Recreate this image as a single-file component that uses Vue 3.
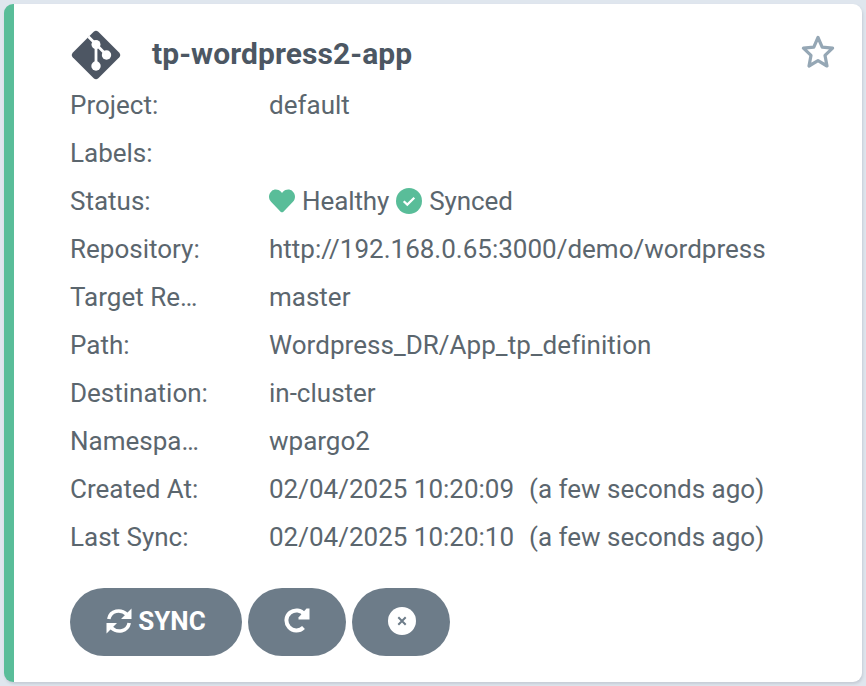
<script setup>
const rows = [
  { label: 'Project:', value: 'default' },
  { label: 'Labels:', value: '' },
  { label: 'Status:', status: true },
  { label: 'Repository:', value: 'http://192.168.0.65:3000/demo/wordpress' },
  { label: 'Target Re…', value: 'master' },
  { label: 'Path:', value: 'Wordpress_DR/App_tp_definition', wide: true },
  { label: 'Destination:', value: 'in-cluster' },
  { label: 'Namespa…', value: 'wpargo2' },
  { label: 'Created At:', value: '02/04/2025 10:20:09', ago: '(a few seconds ago)' },
  { label: 'Last Sync:', value: '02/04/2025 10:20:10', ago: '(a few seconds ago)' },
]
</script>

<template>
  <main class="page">
    <article class="card">
      <header class="head">
        <svg class="git" viewBox="0 0 50 50">
          <path fill="#4d5663" d="M22.7 1.7Q25 -.2 27.3 1.7L48.3 22.7Q50.2 25 48.3 27.3L27.3 48.3Q25 50.2 22.7 48.3L1.7 27.3Q-.2 25 1.7 22.7Z" />
          <path fill="none" stroke="#fff" stroke-width="2.8" d="M17.5 6.8L25 14.3L35.5 25M25 14V36" />
          <g fill="#fff"><circle cx="25" cy="14.5" r="4.5" /><circle cx="35.5" cy="25" r="4.7" /><circle cx="25" cy="36" r="4.7" /></g>
        </svg>
        <h1>tp-wordpress2-app</h1>
        <svg class="star" viewBox="0 0 34 34">
          <path fill="none" stroke="#95a7b5" stroke-width="3.2" stroke-linejoin="round" d="M17 2.5L21.2 12.1L31.6 13.2L24 20.4L26 31L17 25.7L8 31L10 20.4L2.4 13.2L12.8 12.1Z" />
        </svg>
      </header>
      <dl>
        <div v-for="row in rows" :key="row.label" class="row">
          <dt>{{ row.label }}</dt>
          <dd v-if="row.status" class="status">
            <svg class="heart" viewBox="0 0 512 512"><path fill="#59bd99" d="M462.3 62.6C407.5 15.9 326 24.3 275.7 76.2L256 96.5l-19.7-20.3C186.1 24.3 104.5 15.9 49.7 62.6c-62.8 53.6-66.1 149.8-9.9 207.9l193.5 199.8c12.5 12.9 32.8 12.9 45.3 0l193.5-199.8c56.3-58.1 53-154.3-9.8-207.9z" /></svg>
            <span class="healthy">Healthy</span>
            <svg class="check" viewBox="0 0 26 26"><circle cx="13" cy="13" r="13" fill="#59bd99" /><path fill="none" stroke="#fff" stroke-width="2.2" d="M7.7 13.2L11.3 16.6L18.3 9.7" /></svg>
            <span class="synced">Synced</span>
          </dd>
          <dd v-else :class="{ wide: row.wide }">{{ row.value }}<span v-if="row.ago" class="ago">{{ row.ago }}</span></dd>
        </div>
      </dl>
      <footer class="actions">
        <button class="sync">
          <svg viewBox="0 0 26 26">
            <path fill="none" stroke="#fff" stroke-width="3.6" d="M2.8 11C4.5 2.5 14.5 .5 21 6.5M23.2 15C21.5 23.5 11.5 25.5 5 19.5" />
            <path fill="#fff" d="M25.5 .5V11H15L17.5 8.5L22 4ZM.5 25.5V15H11L8.5 17.5L4 22Z" />
          </svg>
          <span>SYNC</span>
        </button>
        <button class="small">
          <svg viewBox="0 0 26 26"><path fill="none" stroke="#fff" stroke-width="4" d="M20.5 6.500A10 10 0 1 0 19.500 19.500" /><path fill="#fff" d="M25.500 .5V11.500H14.500V9.500L22.500 .5Z" /></svg>
        </button>
        <button class="small">
          <svg class="cancel" viewBox="0 0 28 28"><circle cx="14" cy="14" r="14" fill="#fff" /><path stroke="#6d7c89" stroke-width="2" d="M10.3 10.3L17.7 17.7M17.7 10.3L10.3 17.7" /></svg>
        </button>
      </footer>
    </article>
  </main>
</template>

<style>
body { background: #dfe6ee; }
</style>

<style scoped>
* { box-sizing: border-box; }
.page { height: 686px; padding: 4px; overflow: hidden; font-family: Roboto, sans-serif; color: #5b666e; }
.card { height: 678px; background: #fff; border-left: 10px solid #59bd99; border-radius: 9px; padding: 25px 27px 0 56px; box-shadow: 1px 2px 3px #c5cbd5; }
.head { display: flex; height: 52px; align-items: center; }
.git { width: 50px; height: 50px; margin-left: 1px; }
h1 { margin: -3px 0 0 31px; font-size: 30px; font-weight: 700; letter-spacing: .08px; line-height: 50px; color: #4c5763; }
.star { width: 34px; height: 34px; margin-left: auto; margin-top: -6px; }
dl { margin: 0; }
.row { display: flex; height: 48px; align-items: center; font-size: 26px; line-height: 48px; white-space: pre; }
dt { width: 199px; flex: none; }
dd { margin: 0; }
.wide { letter-spacing: .04px; }
.ago { margin-left: 15px; }
.status { display: flex; align-items: center; }
.heart { width: 26px; height: 26px; margin-right: 7px; }
.healthy { margin-right: 7px; letter-spacing: -.1px; }
.check { width: 26px; height: 26px; margin-right: 7px; }
.synced { letter-spacing: -.1px; }
.actions { display: flex; gap: 6px; margin-top: 27px; }
button { height: 68px; border: 0; border-radius: 34px; background: #6d7c89; color: #fff; display: flex; align-items: center; justify-content: center; padding: 0 0 3px; font: 700 26px/34px Roboto, sans-serif; }
button svg { width: 26px; height: 26px; }
.sync { width: 172px; gap: 6px; }
.small { width: 98px; }
.small .cancel { width: 28px; height: 28px; margin-left: 1px; }
</style>
